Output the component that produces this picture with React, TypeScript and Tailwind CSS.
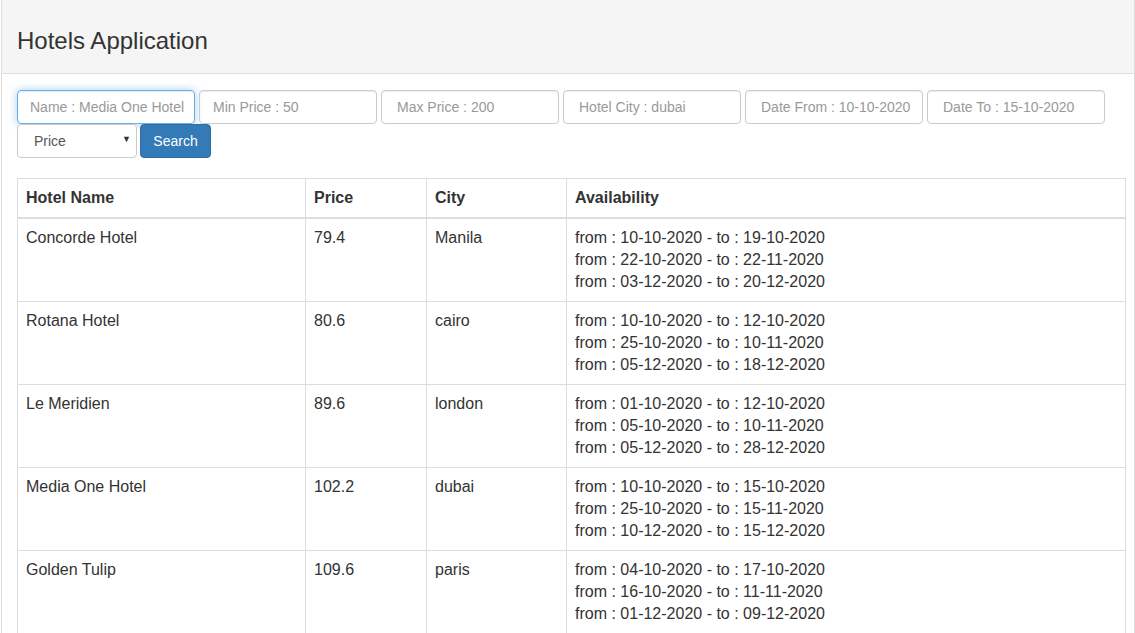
import React from "react";

interface Hotel {
  name: string;
  price: number;
  city: string;
  availability: { from: string; to: string }[];
}

const hotels: Hotel[] = [
  {
    name: "Concorde Hotel",
    price: 79.4,
    city: "Manila",
    availability: [
      { from: "10-10-2020", to: "19-10-2020" },
      { from: "22-10-2020", to: "22-11-2020" },
      { from: "03-12-2020", to: "20-12-2020" },
    ],
  },
  {
    name: "Rotana Hotel",
    price: 80.6,
    city: "cairo",
    availability: [
      { from: "10-10-2020", to: "12-10-2020" },
      { from: "25-10-2020", to: "10-11-2020" },
      { from: "05-12-2020", to: "18-12-2020" },
    ],
  },
  {
    name: "Le Meridien",
    price: 89.6,
    city: "london",
    availability: [
      { from: "01-10-2020", to: "12-10-2020" },
      { from: "05-10-2020", to: "10-11-2020" },
      { from: "05-12-2020", to: "28-12-2020" },
    ],
  },
  {
    name: "Media One Hotel",
    price: 102.2,
    city: "dubai",
    availability: [
      { from: "10-10-2020", to: "15-10-2020" },
      { from: "25-10-2020", to: "15-11-2020" },
      { from: "10-12-2020", to: "15-12-2020" },
    ],
  },
  {
    name: "Golden Tulip",
    price: 109.6,
    city: "paris",
    availability: [
      { from: "04-10-2020", to: "17-10-2020" },
      { from: "16-10-2020", to: "11-11-2020" },
      { from: "01-12-2020", to: "09-12-2020" },
    ],
  },
];

const filters = [
  { placeholder: "Name : Media One Hotel", pad: "pl-[12px]", focus: true },
  { placeholder: "Min Price : 50", pad: "pl-[13px]", focus: false },
  { placeholder: "Max Price : 200", pad: "pl-[15px]", focus: false },
  { placeholder: "Hotel City : dubai", pad: "pl-[15px]", focus: false },
  { placeholder: "Date From : 10-10-2020", pad: "pl-[15px]", focus: false },
  { placeholder: "Date To : 15-10-2020", pad: "pl-[15px]", focus: false },
];

const App = () => {
  return (
    <div
      className="min-h-[633px] bg-white text-[14px] text-[#333]"
      style={{ fontFamily: '"Liberation Sans", Arial, sans-serif' }}
    >
      <div className="ml-px min-h-[633px] border-x border-[#ddd]">
        <div className="flex h-[74px] items-center border-b border-[#ddd] bg-[#f5f5f5] px-[15px] pt-[9px]">
          <h3 className="text-[24px] leading-[26px] font-normal">Hotels Application</h3>
        </div>

        <div className="pt-[16px] pl-[15px]">
          <div className="flex flex-wrap gap-x-[4px]">
            {filters.map((f, i) => (
              <input
                key={i}
                placeholder={f.placeholder}
                className={
                  f.focus
                    ? `h-[34px] w-[178px] rounded-[4px] border border-[#66afe9] ${f.pad} pr-[9px] text-[14px] text-[#555] placeholder:text-[#999] outline-none shadow-[inset_0_1px_1px_rgba(0,0,0,0.075),0_0_8px_rgba(102,175,233,0.6)]`
                    : `h-[34px] w-[178px] rounded-[4px] border border-[#ccc] ${f.pad} pr-[8px] text-[14px] text-[#555] placeholder:text-[#999] outline-none shadow-[inset_0_1px_1px_rgba(0,0,0,0.075)]`
                }
              />
            ))}
          </div>
          <div className="flex gap-x-[3px]">
            <div className="relative h-[34px] w-[120px]">
              <select className="h-full w-full appearance-none rounded-[4px] border border-[#ccc] bg-white pl-[16px] text-[14px] text-[#555] outline-none">
                <option>Price</option>
                <option>Name</option>
              </select>
              <span className="pointer-events-none absolute right-[6px] top-[9px] text-[9px] text-[#333]">▼</span>
            </div>
            <button className="h-[34px] w-[71px] rounded-[4px] border border-[#2e6da4] bg-[#337ab7] text-[14px] text-white">
              Search
            </button>
          </div>

          <table className="mt-[20px] w-[1108px] table-fixed border-collapse border border-[#ddd] text-[16px]">
            <colgroup>
              <col className="w-[288px]" />
              <col className="w-[121px]" />
              <col className="w-[140px]" />
              <col className="w-[559px]" />
            </colgroup>
            <thead>
              <tr>
                <th className="border border-b-2 border-[#ddd] p-[8px] text-left font-bold leading-[22px]">Hotel Name</th>
                <th className="border border-b-2 border-[#ddd] p-[8px] text-left font-bold leading-[22px]">Price</th>
                <th className="border border-b-2 border-[#ddd] p-[8px] text-left font-bold leading-[22px]">City</th>
                <th className="border border-b-2 border-[#ddd] p-[8px] text-left font-bold leading-[22px]">Availability</th>
              </tr>
            </thead>
            <tbody>
              {hotels.map((h) => (
                <tr key={h.name}>
                  <td className="border border-[#ddd] p-[8px] align-top leading-[22px]">{h.name}</td>
                  <td className="border border-[#ddd] p-[8px] align-top leading-[22px]">{h.price}</td>
                  <td className="border border-[#ddd] p-[8px] align-top leading-[22px]">{h.city}</td>
                  <td className="border border-[#ddd] p-[8px] align-top leading-[22px]">
                    {h.availability.map((a, i) => (
                      <div key={i}>
                        from : {a.from} - to : {a.to}
                      </div>
                    ))}
                  </td>
                </tr>
              ))}
            </tbody>
          </table>
        </div>
      </div>
    </div>
  );
};

export default App;
